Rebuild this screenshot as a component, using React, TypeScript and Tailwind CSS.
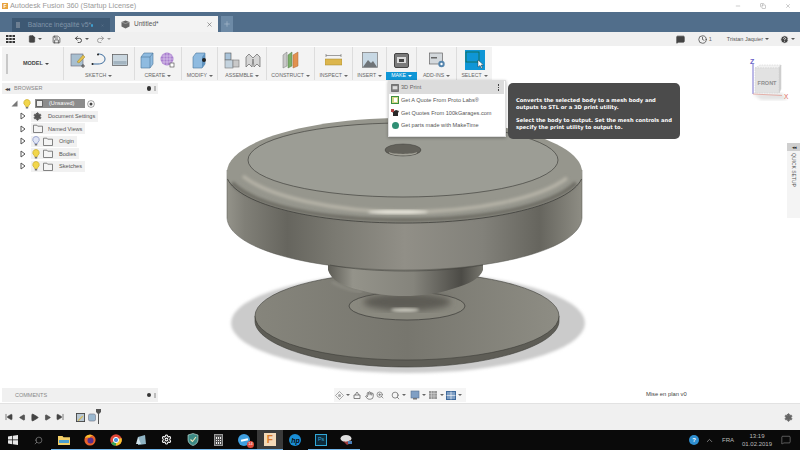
import { ReactNode } from 'react';
import { File, Save, Undo2, Redo2, MessageSquare, Clock, CircleHelp, Settings, SkipBack, SkipForward, Play, Search, Hand, ZoomIn, ChevronUp, Minus, Copy, X, Plus } from 'lucide-react';

function Caret({ className = '' }: { className?: string }) {
  return <span className={`inline-block w-0 h-0 border-x-[2px] border-x-transparent border-t-[2.5px] border-t-current ml-[2px] align-middle ${className}`} />;
}

function Bulb({ on = true }: { on?: boolean }) {
  return (
    <svg width="8" height="10" viewBox="0 0 8 10">
      <path d="M4 .5a3.2 3.2 0 0 0-2 5.7c.4.4.6.8.6 1.3h2.8c0-.5.2-.9.6-1.3A3.2 3.2 0 0 0 4 .5z" fill={on ? '#f2d64b' : '#dfe4f4'} stroke={on ? '#c9ab2a' : '#7d8bc2'} strokeWidth=".7" />
      <rect x="2.8" y="8" width="2.4" height="1.5" fill="#777" />
    </svg>
  );
}

function Folder() {
  return (
    <svg width="10" height="9" viewBox="0 0 10 9">
      <path d="M.5 1.2h3.4l.8 1h4.8v6.3H.5z" fill="#f4f4f4" stroke="#666" strokeWidth=".8" />
    </svg>
  );
}

function TreeTriangle() {
  return (
    <svg width="6" height="8" viewBox="0 0 6 8">
      <path d="M1 1l4 3-4 3z" fill="#fff" stroke="#555" />
    </svg>
  );
}

function TreeRow({ bulb, icon, label }: { bulb?: ReactNode; icon: ReactNode; label: string }) {
  return (
    <div className="h-[12.5px] flex items-center pl-[18px]">
      <TreeTriangle />
      <div className="flex items-center h-[11px] bg-[#f1f1f1] ml-[5px] pr-[3px]">
        {bulb && <span className="w-[10px] flex justify-center">{bulb}</span>}
        <span className="w-[13px] flex justify-center">{icon}</span>
        <span className={`text-[#555] text-[5.6px] ${bulb ? 'ml-[5px]' : 'ml-[4px]'}`}>{label}</span>
      </div>
    </div>
  );
}

function Group({ w, label, active, children }: { w: string; label: string; active?: boolean; children?: ReactNode }) {
  return (
    <div className={`${w} h-full flex flex-col items-center justify-between border-r border-[#dddddd] last:border-r-0 pt-[3px]`}>
      <div className="flex items-center justify-center gap-[5px] h-[20px]">{children}</div>
      <div className={`h-[8px] px-[5px] flex items-center text-[5.2px] leading-none ${active ? 'bg-[#0f96d6] text-white' : 'text-[#666]'}`}>
        {label}
        <Caret />
      </div>
    </div>
  );
}

function Underlined({ on, children }: { on?: boolean; children: ReactNode }) {
  return (
    <div className={`w-[25.7px] h-full flex items-center justify-center relative ${on ? 'border-b-[1.5px] border-[#76b9ed]' : ''}`}>
      {children}
    </div>
  );
}

function Taskbar() {
  return (
    <div className="h-[20px] bg-[#0a0a0a] flex items-center text-[#ccc] shrink-0">
      <div className="flex h-full">
        <Underlined>
          <svg width="10" height="10" viewBox="0 0 10 10"><path d="M0 1.5l4.3-.7v3.8H0zM5 .7L10 0v4.6H5zM0 5.3h4.3v3.9L0 8.5zM5 5.3h5V10l-5-.7z" fill="#e8e8e8" /></svg>
        </Underlined>
        <Underlined><Search size={9} strokeWidth={1.3} className="-scale-x-100 text-[#bbb]" /></Underlined>
        <Underlined on>
          <svg width="12" height="10" viewBox="0 0 12 10"><path d="M0 1h4.5l1 1.2H12V10H0z" fill="#f3cf68" /><rect x="1" y="5" width="10" height="3" fill="#4a9fd0" /></svg>
        </Underlined>
        <Underlined on>
          <svg width="12" height="12" viewBox="0 0 12 12"><circle cx="6" cy="6" r="5.6" fill="#e8622a" /><circle cx="6.5" cy="6.5" r="3" fill="#5a2e8c" /><path d="M1 4c1-3 5-4 8-2.5-2 0-3 1-3 2-2 0-4 0-5 .5z" fill="#f9c22e" /></svg>
        </Underlined>
        <Underlined on>
          <svg width="12" height="12" viewBox="0 0 12 12"><circle cx="6" cy="6" r="5.8" fill="#e0483a" /><path d="M6 6L1 9.2A5.8 5.8 0 0 0 6 11.8z" fill="#3ba657" /><path d="M6 6l5.4-2A5.8 5.8 0 0 1 6 11.8z" fill="#f6c62f" /><circle cx="6" cy="6" r="2.6" fill="#4a8fe0" stroke="#fff" /></svg>
        </Underlined>
        <Underlined on>
          <svg width="12" height="12" viewBox="0 0 12 12"><path d="M3 3l7-2 1 9-8 1z" fill="#8fb4c4" /><path d="M1 10l2-7 3 7z" fill="#d0e2ea" /></svg>
        </Underlined>
        <Underlined on><Settings size={11} className="text-white" strokeWidth={2.2} /></Underlined>
        <Underlined on>
          <svg width="12" height="13" viewBox="0 0 12 13"><path d="M1 2l5-1.5L11 2v5c0 3-3 5-5 5.5C4 12 1 10 1 7z" fill="#3c8a85" stroke="#cfe7e0" strokeWidth=".6" /><path d="M3.5 6.5L5.5 8.5 9 4" fill="none" stroke="#f2e6b8" strokeWidth="1.1" /></svg>
        </Underlined>
        <Underlined on>
          <div className="w-[9px] h-[12px] bg-[#555] border border-[#999] grid grid-cols-3 gap-[1px] p-[1px] content-end">
            {Array.from({ length: 9 }).map((_, i) => <span key={i} className="h-[1.5px] bg-[#eee]" />)}
          </div>
        </Underlined>
        <Underlined on>
          <div className="relative">
            <div className="w-[12px] h-[12px] rounded-full bg-[#3f9fe0] flex items-center justify-center">
              <div className="w-[7px] h-[2px] bg-white -rotate-12" />
            </div>
            <div className="absolute -right-[4px] -bottom-[2px] w-[7px] h-[7px] rounded-full bg-[#e04b3c] text-white text-[4px] flex items-center justify-center">14</div>
          </div>
        </Underlined>
        <div className="w-[25.7px] h-full bg-[#3a3a3a] border-b-[1.5px] border-[#76b9ed] flex items-center justify-center">
          <div className="w-[12px] h-[13px] bg-[#f3d9b8] flex items-center justify-center text-[#d9782a] text-[10px] font-bold leading-none">F</div>
        </div>
        <Underlined>
          <div className="w-[12px] h-[12px] rounded-full bg-[#1a8ed6] flex items-center justify-center text-[#0a0a0a] text-[7px] font-bold italic leading-none">hp</div>
        </Underlined>
        <Underlined on>
          <div className="w-[12px] h-[12px] bg-[#0d2a3a] border border-[#31a8d8] text-[#31a8d8] text-[5.5px] flex items-center justify-center leading-none">Ps</div>
        </Underlined>
        <Underlined on>
          <svg width="14" height="12" viewBox="0 0 14 12"><ellipse cx="6" cy="4.5" rx="5.5" ry="3.5" fill="#ddd" /><path d="M3 7c2 1 5 1 7-1l1 3-4 2z" fill="#a03a3a" /><rect x="8" y="7" width="4" height="3" fill="#4a7fb8" /></svg>
        </Underlined>
      </div>
      <div className="flex-1" />
      <div className="flex items-center h-full text-[6px]">
        <div className="w-[10px] h-[10px] rounded-full bg-[#2f8fd0] flex items-center justify-center text-white text-[6px] font-bold">?</div>
        <ChevronUp size={9} className="ml-[6px] text-[#999]" />
        <span className="ml-[8px] text-[#bbb]">FRA</span>
        <div className="ml-[7px] flex flex-col items-center leading-[8px] text-[#bbb] w-[32px]">
          <span>13:19</span>
          <span>01.02.2019</span>
        </div>
        <MessageSquare size={10} strokeWidth={1} className="ml-[8px] text-[#ccc]" />
        <div className="w-[9px]" />
      </div>
    </div>
  );
}

function Knob() {
  return (
    <svg width="800" height="357" viewBox="0 46 800 357" className="absolute left-0 top-0">
      <defs>
        <linearGradient id="side" x1="0" x2="1" y1="0" y2="0">
          <stop offset="0" stopColor="#94938a" />
          <stop offset=".05" stopColor="#807f77" />
          <stop offset=".17" stopColor="#66655e" />
          <stop offset=".3" stopColor="#7a7971" />
          <stop offset=".5" stopColor="#918f87" />
          <stop offset=".72" stopColor="#82817a" />
          <stop offset=".88" stopColor="#66655e" />
          <stop offset="1" stopColor="#8e8d84" />
        </linearGradient>
        <linearGradient id="neck" x1="0" x2="1" y1="0" y2="0">
          <stop offset="0" stopColor="#5e5d56" />
          <stop offset=".16" stopColor="#94938a" />
          <stop offset=".55" stopColor="#85847c" />
          <stop offset=".86" stopColor="#4c4b46" />
          <stop offset="1" stopColor="#77766e" />
        </linearGradient>
        <linearGradient id="disc" x1="0" x2="1" y1="0" y2="0">
          <stop offset="0" stopColor="#86857c" />
          <stop offset=".5" stopColor="#77766e" />
          <stop offset="1" stopColor="#8e8d84" />
        </linearGradient>
        <filter id="blur1"><feGaussianBlur stdDeviation="3" /></filter>
        <filter id="blur2"><feGaussianBlur stdDeviation="1.6" /></filter>
      </defs>

      <ellipse cx="408" cy="323" rx="177" ry="50" fill="#cbcbcb" filter="url(#blur2)" />

      <path d="M255 316v5c0 24 68 46 152 46s152-22 152-46v-5z" fill="#5e5d56" stroke="#3d3d38" strokeWidth=".6" />
      <ellipse cx="407" cy="316" rx="152" ry="44" fill="url(#disc)" stroke="#3d3d38" strokeWidth=".6" />

      <ellipse cx="407" cy="306" rx="58" ry="14" fill="#8a897f" stroke="#3a3a36" strokeWidth=".7" />
      <ellipse cx="407" cy="302" rx="44" ry="9" fill="#5d5c55" filter="url(#blur1)" />
      <ellipse cx="405" cy="310" rx="14" ry="2" fill="#c9c8bd" filter="url(#blur2)" />

      <path d="M328 262v8c3 10 14 16 32 20 14 4 30 6 45 6s32-2 47-7c18-5 28-11 31-19v-8z" fill="url(#neck)" />
      <path d="M332 282c10 6 22 9 30 10" fill="none" stroke="#a5a49a" strokeWidth="1" filter="url(#blur2)" />

      <path d="M227 170v48c2 30 80 52 177 52s176-22 178-52v-48z" fill="url(#side)" stroke="#55544e" strokeWidth=".5" />
      <path d="M330 265c40 8 110 8 153 0" fill="none" stroke="#444440" strokeWidth=".6" />
      <path d="M227 172c0-30 80-54 177-54s178 24 178 54c0 2-.2 5-.4 7-12 26-88 44-177.600 44S240 205 227.500 179c-.3-2-.5-5-.5-7z" fill="#96968d" />
      <path d="M232 183C255 206 320 220 404 220s148-14 172-37" fill="none" stroke="#6d6c64" strokeWidth="4" filter="url(#blur2)" />
      <path d="M243 176c24 20 90 36 162 36s136-14 162-34" fill="none" stroke="#b6b3a7" strokeWidth="3.500" filter="url(#blur2)" />
      <ellipse cx="398" cy="212" rx="30" ry="1.800" fill="#ebe9df" filter="url(#blur2)" />
      <path d="M227.500 179C240 205 315 223 404 223s165-18 177.600-44" fill="none" stroke="#333330" strokeWidth=".7" />

      <ellipse cx="403" cy="160" rx="155" ry="37" fill="#9c9d95" stroke="#44443f" strokeWidth=".7" />
      <ellipse cx="403" cy="150" rx="18" ry="6" fill="#63625b" stroke="#3d3d38" strokeWidth=".5" />
      <path d="M389 152c4 2.500 24 2.500 28 0 1 2-6 3.600-14 3.600s-15-1.600-14-3.600z" fill="#a2a197" />

      {/* view cube */}
      <path d="M753 94l8 6h26l-5-7z" fill="#e4e4e4" filter="url(#blur2)" />
      <path d="M755 68l5-3h21l-2 3z" fill="#f2f2f2" stroke="#c9c9c9" strokeWidth=".5" strokeDasharray="1.500 1" />
      <path d="M779 68l2-3v24l-2 4z" fill="#cfcfcf" stroke="#c9c9c9" strokeWidth=".5" />
      <rect x="755" y="68" width="24" height="25" fill="#e2e2e2" stroke="#cfcfcf" strokeWidth=".5" strokeDasharray="1.500 1" />
      <text x="767" y="85" textAnchor="middle" fontSize="5.500" fontWeight="700" fill="#8f8f8f" fontFamily="Liberation Sans, sans-serif">FRONT</text>
      <path d="M753 64v30" stroke="#6a62c8" strokeWidth=".9" />
      <path d="M753 94l29 1.500" stroke="#e2a8a0" strokeWidth=".9" />
      <text x="750" y="64" fontSize="7" fontWeight="700" fill="#6a62c8" fontFamily="Liberation Sans, sans-serif">Z</text>
      <text x="784" y="99" fontSize="6.500" fill="#e06a60" fontFamily="Liberation Sans, sans-serif">X</text>
    </svg>
  );
}

export default function App() {
  return (
    <div className="w-[800px] h-[450px] overflow-hidden flex flex-col bg-white font-['Liberation_Sans',Arial,sans-serif]">
      {/* title bar */}
      <div className="h-[12px] shrink-0 flex items-center pl-[2px] text-[#999] text-[7.3px]">
        <div className="w-[6px] h-[6px] bg-[#e8a33d] text-white text-[5px] font-bold leading-none flex items-center justify-center">F</div>
        <span className="ml-[2px]">Autodesk Fusion 360 (Startup License)</span>
        <div className="flex-1" />
        <Minus size={6} className="text-[#999] mr-[19px]" />
        <Copy size={6} className="text-[#999] mr-[19px]" />
        <X size={6} className="text-[#999] mr-[9px]" />
      </div>

      {/* tabs */}
      <div className="h-[20px] shrink-0 bg-[#516e8b] flex items-end pl-[12px]">
        <div className="w-[98px] h-[14px] bg-[#3d5873] flex items-center pl-[4px] text-[#7f93a8] text-[6.8px] whitespace-nowrap">
          <div className="w-[6px] h-[6px] bg-[#6d7f92]" />
          <span className="ml-[8px] flex-1">Balance inégalité v5*</span>
          <span className="w-[3px] h-[3px] rounded-full bg-[#3fa0d0] mr-[8px]" />
          <X size={5} className="mr-[6px]" />
        </div>
        <div className="ml-[5px] w-[103px] h-[16px] bg-[#f3f3f3] flex items-center pl-[6px] text-[#555] text-[6.5px]">
          <svg width="9" height="9" viewBox="0 0 9 9"><path d="M4.500 .5l4 1.500v4.500l-4 2-4-2V2z" fill="#666" /><path d="M.5 2l4 1.500 4-1.500" fill="none" stroke="#ccc" strokeWidth=".5" /></svg>
          <span className="ml-[4px] flex-1">Untitled*</span>
          <X size={7} strokeWidth={2} className="mr-[5px] text-[#666]" />
        </div>
        <div className="ml-[3px] w-[12px] h-[16px] bg-[#6d8aa6] flex items-center justify-center">
          <Plus size={8} className="text-[#a9bccd]" strokeWidth={2} />
        </div>
      </div>

      {/* quick access */}
      <div className="h-[14px] shrink-0 bg-[#f0f0f0] flex items-center text-[#444]">
        <svg width="9" height="8" viewBox="0 0 9 8" className="ml-[6px]">
          <path d="M0 0h2.500v2H0zM3.250 0h2.500v2h-2.500zM6.500 0H9v2H6.500zM0 3h2.500v2H0zM3.250 3h2.500v2h-2.500zM6.500 3H9v2H6.500zM0 6h2.500v2H0zM3.250 6h2.500v2h-2.500zM6.500 6H9v2H6.500z" fill="#333" />
        </svg>
        <File size={8} fill="#444" className="ml-[13px]" />
        <Caret className="text-[#555]" />
        <Save size={9} strokeWidth={2} className="ml-[10px]" />
        <Undo2 size={9} strokeWidth={2.500} className="ml-[13px]" />
        <Caret className="text-[#555]" />
        <Redo2 size={9} strokeWidth={2.500} className="ml-[7px] text-[#999]" />
        <Caret className="text-[#999]" />
        <div className="flex-1" />
        <MessageSquare size={9} fill="#444" className="mr-[13px]" />
        <Clock size={9} strokeWidth={2} />
        <span className="text-[5.500px] text-[#666] ml-[2px] mr-[15px]">1</span>
        <span className="text-[5.500px] text-[#555]">Tristan Jaquier</span>
        <Caret className="mr-[11px] text-[#555]" />
        <CircleHelp size={9} fill="#444" className="text-white" />
        <Caret className="mr-[5px] text-[#555]" />
      </div>

      {/* main */}
      <div className="flex-1 relative min-h-0">
        <Knob />

        {/* ribbon */}
        <div className="relative pt-[1px] pl-[2px]">
          <div className="flex h-[34px] w-[490px] bg-[#f3f3f3] pb-[1px]">
            <div className="w-[62px] h-full flex items-center border-r border-[#dddddd]">
              <div className="w-[1.500px] h-[20px] border-x border-[#c8c8c8] ml-[4px]" />
              <span className="ml-[15px] text-[5.500px] text-[#444] font-bold">MODEL</span>
              <Caret className="text-[#444]" />
            </div>
            <Group w="w-[71px]" label="SKETCH">
              <svg width="16" height="16" viewBox="0 0 16 16"><rect x="1" y="2" width="12" height="12" fill="#a8bfd0" stroke="#667" strokeWidth=".6" /><path d="M7 10l6-7 2 2-6 6z" fill="#e3c04e" stroke="#8a7520" strokeWidth=".4" /><path d="M11 14h4M13 12v4" stroke="#555" strokeWidth="1" /></svg>
              <svg width="16" height="14" viewBox="0 0 16 14"><path d="M1 11h6c4 0 7-2 7-5s-3-5-7-5" fill="none" stroke="#3d6d9e" strokeWidth="1" /><circle cx="1.500" cy="11" r="1" fill="#222" /><circle cx="7" cy="1.500" r="1" fill="#222" /></svg>
              <svg width="16" height="12" viewBox="0 0 16 12"><rect x=".5" y=".5" width="15" height="11" fill="#c9d6df" stroke="#555" strokeWidth=".7" /><rect x="1.500" y="7" width="13" height="3.500" fill="#a3b4c0" /></svg>
            </Group>
            <Group w="w-[48px]" label="CREATE">
              <svg width="15" height="17" viewBox="0 0 15 17"><path d="M1 5l3-4h9v11l-3 4H1z" fill="#8fbbe0" stroke="#4c769b" strokeWidth=".6" /><path d="M1 5h9l3-4M10 5v11" fill="none" stroke="#4c769b" strokeWidth=".6" /></svg>
              <svg width="15" height="16" viewBox="0 0 15 16"><circle cx="7" cy="7" r="6.500" fill="#a97fcf" /><path d="M1 4h12M.5 7h13M1 10h12M4 1v12M7 .5v13M10 1v12" stroke="#e7d8f2" strokeWidth=".6" /><rect x="10" y="11" width="4" height="4" fill="#fff" stroke="#444" strokeWidth=".6" /></svg>
            </Group>
            <Group w="w-[36px]" label="MODIFY">
              <svg width="15" height="17" viewBox="0 0 15 17"><path d="M1 5l3-4h9v11l-3 4H1z" fill="#8fbbe0" stroke="#4c769b" strokeWidth=".6" /><path d="M10 5l3-4v11l-3 4z" fill="#5f93bf" /><circle cx="12" cy="8" r="2" fill="#222" /></svg>
            </Group>
            <Group w="w-[49px]" label="ASSEMBLE">
              <svg width="16" height="17" viewBox="0 0 16 17"><rect x="1" y="1" width="6" height="7" fill="#a9c3d9" stroke="#555" strokeWidth=".6" /><rect x="1" y="8" width="8" height="8" fill="#c4d3de" stroke="#777" strokeWidth=".6" /><rect x="9" y="8" width="6" height="7" fill="#c9c9c9" stroke="#777" strokeWidth=".6" /></svg>
              <svg width="16" height="17" viewBox="0 0 16 17"><path d="M1 15V5l3-3 4 4 4-4 3 3v10l-3-3-3 3-1-8-1 8-3-3z" fill="#d5d5d5" stroke="#666" strokeWidth=".7" /></svg>
            </Group>
            <Group w="w-[48px]" label="CONSTRUCT">
              <svg width="17" height="18" viewBox="0 0 17 18"><path d="M1 4l4-3v14l-4 2z" fill="#c8c8c8" stroke="#777" strokeWidth=".5" /><path d="M6 4l4-3v14l-4 2z" fill="#7cb06a" stroke="#55774a" strokeWidth=".5" /><path d="M11 4l5-3v14l-5 2z" fill="#e2914f" stroke="#a8683a" strokeWidth=".5" /></svg>
            </Group>
            <Group w="w-[38px]" label="INSPECT">
              <svg width="17" height="14" viewBox="0 0 17 14"><path d="M1 1v3M16 1v3M1 2.500h15" stroke="#777" strokeWidth=".7" /><rect x="0" y="6" width="17" height="6" fill="#dcb64d" stroke="#a3862f" strokeWidth=".5" /></svg>
            </Group>
            <Group w="w-[34px]" label="INSERT">
              <svg width="16" height="16" viewBox="0 0 16 16"><rect x=".5" y=".5" width="15" height="15" fill="#c7d8e4" stroke="#777" strokeWidth=".7" /><path d="M1 15l5-7 3 3 2-2 4 6z" fill="#6f7478" /></svg>
            </Group>
            <Group w="w-[30px]" label="MAKE" active>
              <svg width="15" height="15" viewBox="0 0 15 15"><rect x=".5" y=".5" width="14" height="14" rx="1.500" fill="#7b7b7b" stroke="#444" /><rect x="3" y="4" width="9" height="6" fill="#dcdcdc" /><rect x="5" y="6" width="5" height="3" fill="#444" /></svg>
            </Group>
            <Group w="w-[40px]" label="ADD-INS">
              <svg width="16" height="16" viewBox="0 0 16 16"><rect x=".5" y="1" width="13" height="11" fill="#d3d8dc" stroke="#666" strokeWidth=".7" /><rect x="2" y="5" width="6" height="1.500" fill="#666" /><circle cx="12.500" cy="12" r="3.200" fill="#5585ad" /><circle cx="12.500" cy="12" r="1.200" fill="#fff" /></svg>
            </Group>
            <Group w="w-[35px]" label="SELECT">
              <svg width="20" height="20" viewBox="0 0 20 20"><rect width="20" height="20" fill="#0f96d6" /><rect x="1" y="2" width="13" height="10" fill="none" stroke="#136a4a" strokeWidth=".8" /><path d="M13 10v7l2-1.500 1.500 3 1-.5-1.500-3h2.500z" fill="#fff" stroke="#222" strokeWidth=".4" /></svg>
            </Group>
          </div>
        </div>

        {/* browser */}
        <div className="relative mt-[2px] w-[156px] ml-[2px]">
          <div className="h-[11px] bg-[#f0f0f0] flex items-center text-[#888] text-[5.500px] pl-[3px]">
            <span className="text-[#444] text-[6px] leading-none tracking-[-1px]">◂◂</span>
            <span className="ml-[5px] flex-1">BROWSER</span>
            <div className="w-[4.500px] h-[4.500px] rounded-full bg-[#333] mr-[3px]" />
            <div className="w-[1.500px] h-[5px] border-x border-[#bbb] mr-[2px]" />
          </div>
          <div className="mt-[3px]">
            <div className="h-[13px] flex items-center pl-[9px]">
              <svg width="7" height="7" viewBox="0 0 7 7"><path d="M6.500 .5v6H.5z" fill="#777" /></svg>
              <span className="ml-[5px]"><Bulb /></span>
              <div className="ml-[4px] h-[8.500px] w-[50px] bg-[#8c8c8c] flex items-center text-white text-[5.500px]">
                <div className="w-[7px] h-[7px] ml-[1px] bg-[#eee] border border-[#666]" />
                <span className="ml-[6px]">(Unsaved)</span>
              </div>
              <svg width="8" height="8" viewBox="0 0 8 8" className="ml-[2px]"><circle cx="4" cy="4" r="3.400" fill="#fff" stroke="#666" strokeWidth=".6" /><circle cx="4" cy="4" r="1.500" fill="#444" /></svg>
            </div>
            <TreeRow icon={<Settings size={9} fill="#555" strokeWidth={2.500} className="text-[#555]" />} label="Document Settings" />
            <TreeRow icon={<Folder />} label="Named Views" />
            <TreeRow bulb={<Bulb on={false} />} icon={<Folder />} label="Origin" />
            <TreeRow bulb={<Bulb />} icon={<Folder />} label="Bodies" />
            <TreeRow bulb={<Bulb />} icon={<Folder />} label="Sketches" />
          </div>
        </div>

        {/* make dropdown */}
        <div className="absolute left-[388px] top-[34px] w-[118px] h-[57px] bg-white border border-[#ddd] shadow-[0_1px_3px_rgba(0,0,0,0.3)] text-[#555] text-[5.600px]">
          <div className="h-[13px] bg-[#dcdcdc] w-[115px] flex items-center pl-[2px]">
            <svg width="8" height="8" viewBox="0 0 15 15"><rect x=".5" y=".5" width="14" height="14" rx="1.500" fill="#7b7b7b" stroke="#444" /><rect x="3" y="4" width="9" height="6" fill="#dcdcdc" /></svg>
            <span className="ml-[2px] flex-1 text-[#666]">3D Print</span>
            <div className="flex flex-col gap-[1px] mr-[5px]">
              <span className="w-[1.500px] h-[1.500px] bg-[#444]" />
              <span className="w-[1.500px] h-[1.500px] bg-[#444]" />
              <span className="w-[1.500px] h-[1.500px] bg-[#444]" />
            </div>
          </div>
          <div className="h-[12.500px] flex items-center pl-[2px]">
            <div className="w-[8px] h-[8px] bg-[#d6d98a] border border-[#3f8f3f] flex items-center justify-center"><span className="w-[3px] h-[4px] bg-white" /></div>
            <span className="ml-[2px]">Get A Quote From Proto Labs®</span>
          </div>
          <div className="h-[12.500px] flex items-center pl-[2px]">
            <svg width="8" height="8" viewBox="0 0 8 8"><path d="M0 1l3 1 2-1 3 1-1 2v3H2V4z" fill="#2a2a2a" /><rect x="0" y="0" width="3" height="3" fill="#b04040" /></svg>
            <span className="ml-[2px]">Get Quotes From 100kGarages.com</span>
          </div>
          <div className="h-[12.500px] flex items-center pl-[3px]">
            <div className="w-[7px] h-[7px] rounded-full bg-[#2f8f75]" />
            <span className="ml-[2px]">Get parts made with MakeTime</span>
          </div>
        </div>

        {/* tooltip */}
        <div className="absolute left-[508px] top-[37px] w-[172px] h-[56px] bg-[#4b4b4b] rounded-[5px] pl-[8px] pt-[14px] text-white text-[5.200px] leading-[7px] font-bold whitespace-nowrap font-['DejaVu_Sans',sans-serif]">
          <p>Converts the selected body to a mesh body and</p>
          <p>outputs to STL or a 3D print utility.</p>
          <p className="mt-[6px]">Select the body to output. Set the mesh controls and</p>
          <p>specify the print utility to output to.</p>
        </div>

        {/* quick setup */}
        <div className="absolute right-0 top-[97px] w-[13px] h-[75px] bg-[#f4f4f4] flex flex-col items-center">
          <div className="w-full h-[8px] bg-[#cfcfcf] text-[#333] text-[5px] leading-none flex items-center justify-center tracking-[-1px]">◂◂</div>
          <span className="[writing-mode:vertical-rl] text-[#555] text-[5px] whitespace-nowrap mt-[2px]">QUICK SETUP</span>
        </div>

        {/* comments + nav bar */}
        <div className="absolute left-[2px] bottom-[1px] w-[156px] h-[14px] bg-[#f0f0f0] flex items-center text-[#888] text-[5.500px] pl-[13px]">
          <span className="flex-1">COMMENTS</span>
          <div className="w-[4.500px] h-[4.500px] rounded-full bg-[#333] mr-[3px]" />
          <div className="w-[1.500px] h-[5px] border-x border-[#bbb] mr-[2px]" />
        </div>
        <div className="absolute left-[334px] bottom-[1px] w-[132px] h-[14px] bg-[#f5f5f5] flex items-center text-[#666] pl-[1px]">
          <svg width="9" height="9" viewBox="0 0 9 9"><path d="M4.500 .5L8.500 4.500 4.500 8.500 .5 4.500z" fill="none" stroke="#888" strokeWidth=".7" /><circle cx="4.500" cy="4.500" r="1.500" fill="#aaa" /></svg>
          <Caret />
          <svg width="8" height="8" viewBox="0 0 8 8" className="ml-[3px]"><path d="M1 4h6v3.500H1zM2 4l2-3 2 3" fill="none" stroke="#666" strokeWidth=".8" /></svg>
          <Hand size={9} className="ml-[4px]" />
          <ZoomIn size={8} className="ml-[2px]" />
          <Search size={9} className="ml-[7px]" />
          <Caret />
          <svg width="10" height="10" viewBox="0 0 10 10" className="ml-[4px]"><rect x="1" y="1" width="8" height="7" fill="#7f9fc4" stroke="#55708f" strokeWidth=".6" /><rect x="3" y="8" width="4" height="1.500" fill="#777" /></svg>
          <Caret />
          <svg width="10" height="10" viewBox="0 0 10 10" className="ml-[2px]"><path d="M1 1h8v8H1z" fill="#999" /><path d="M1 3.500h8M1 6h8M3.500 1v8M6 1v8" stroke="#ddd" strokeWidth=".5" /></svg>
          <Caret />
          <svg width="10" height="9" viewBox="0 0 10 9" className="ml-[2px]"><rect x=".5" y=".5" width="9" height="8" fill="#7f9fc4" stroke="#3f6a9c" /><path d="M.5 4.500h9M5 .5v8" stroke="#fff" strokeWidth=".6" /></svg>
          <Caret />
        </div>
        <span className="absolute left-[646px] bottom-[4px] text-[#444] text-[5.800px]">Mise en plan v0</span>
      </div>

      {/* timeline */}
      <div className="h-[27px] shrink-0 bg-[#f0f0f0] border-t border-[#e2e2e2] flex items-center text-[#444]">
        <SkipBack size={8} fill="#444" className="ml-[5px]" />
        <Play size={7} fill="#555" className="ml-[5.500px] rotate-180" />
        <Play size={9} fill="#444" className="ml-[4px]" />
        <Play size={7} fill="#555" className="ml-[5.500px]" />
        <SkipForward size={8} fill="#444" className="ml-[5px]" />
        <svg width="9" height="9" viewBox="0 0 10 10" className="ml-[12px]"><rect x=".5" y=".5" width="9" height="9" fill="#b8c7d2" stroke="#444" /><path d="M2 8l5-5 1 1-5 5z" fill="#d8b64a" /></svg>
        <svg width="8" height="9" viewBox="0 0 9 10" className="ml-[3px]"><rect x=".5" y="1" width="8" height="8" rx="2" fill="#9ab8d0" stroke="#667" strokeWidth=".6" /></svg>
        <svg width="5" height="15" viewBox="0 0 5 15" className="-mt-[1px]"><path d="M0 0h5v3L3 5v10H2V5L0 3z" fill="#555" /></svg>
        <div className="flex-1" />
        <Settings size={9} fill="#666" className="mr-[7px] text-[#666]" strokeWidth={2.500} />
      </div>

      <Taskbar />
    </div>
  );
}
